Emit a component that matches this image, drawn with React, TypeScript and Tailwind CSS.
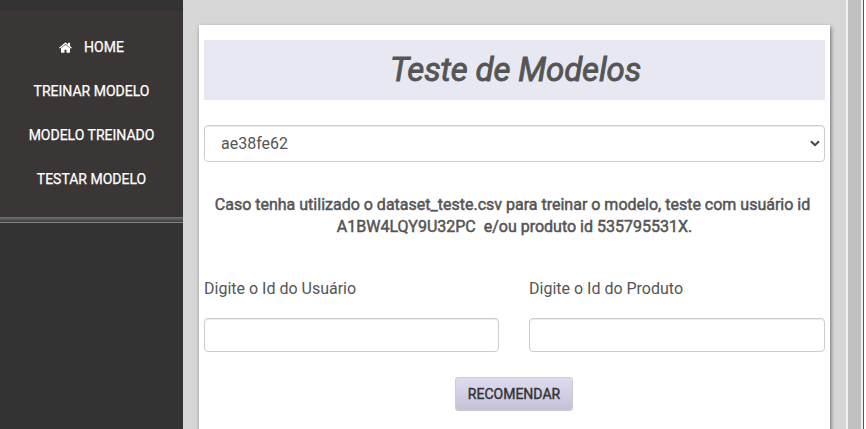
const links = ["TREINAR MODELO", "MODELO TREINADO", "TESTAR MODELO"];

function Sidebar() {
  return (
    <aside className="h-full w-[183px] shrink-0 bg-[#333333] pt-[10px]">
      <nav className="flex h-[207px] flex-col items-center bg-[#3b3636] pt-[15px] text-[14px] text-white shadow-[0_0_2px_#2b2929] [-webkit-text-stroke:0.250px_#ffffff]">
        <a className="flex h-11 items-center">
          <svg viewBox="0 0 1664 1312" className="mr-[12px] h-[11px] w-[13px] fill-white">
            <path d="M1408 768v480q0 26-19 45t-45 19H960V928H704v384H320q-26 0-45-19t-19-45V768q0-1 .5-3t.5-3l575-474 575 474q1 2 1 6zm223-69l-62 74q-8 9-21 11h-3q-13 0-21-7L832 200 140 777q-12 8-24 7-13-2-21-11l-62-74q-8-10-7-23.500t11-21.500l719-599q32-26 76-26t76 26l244 204V64q0-14 9-23t23-9h192q14 0 23 9t9 23v408l219 182q10 8 11 21.500t-7 23.500z" />
          </svg>
          HOME
        </a>
        {links.map((label) => (
          <a key={label} className="flex h-11 items-center">{label}</a>
        ))}
      </nav>
      <div className="h-[5px] bg-linear-to-b from-[#747272] to-[#3c3c3c]" />
      <div className="h-px bg-[#858585]" />
    </aside>
  );
}

function Field({ label }: { label: string }) {
  return (
    <label className="block">
      <span className="block h-[22px] leading-[22px]">{label}</span>
      <input className="mt-[18px] block h-[34px] w-full rounded-[4px] border border-[#cccccc] bg-white px-3 shadow-[inset_0_1px_1px_rgba(0,0,0,0.075)] outline-none" />
    </label>
  );
}

export default function App() {
  return (
    <div className="flex h-[429px] w-[866px] overflow-hidden bg-white font-[Roboto,sans-serif] text-[16px] text-[#555555]">
      <Sidebar />
      <main className="h-full w-[663px] shrink-0 bg-[#d7d7d7] pt-[25px] pl-4">
        <section className="h-[440px] w-[631px] bg-white px-[5px] pt-[15px] shadow-[1px_2px_4px_rgba(0,0,0,0.5)]">
          <h1 className="h-[60px] bg-[#e8e8f2] pl-[2px] text-center text-[33px] leading-[59px] tracking-[-0.15px] italic [-webkit-text-stroke:0.900px_#555555]">
            Teste de Modelos
          </h1>
          <div className="mt-[25px] flex h-[37px] items-center justify-between rounded-[4px] border border-[#cccccc] pr-[4px] pl-4 shadow-[inset_0_1px_1px_rgba(0,0,0,0.075)]">
            <span>ae38fe62</span>
            <svg viewBox="0 0 10 7" className="h-[7px] w-[10px] fill-none stroke-[#444444] stroke-2">
              <path d="M1 1.200 5 5.200 9 1.200" />
            </svg>
          </div>
          <p className="mt-8 text-center leading-[22px] whitespace-pre [-webkit-text-stroke:0.500px_#555555]">
            {"Caso tenha utilizado o dataset_teste.csv para treinar o modelo, teste com usuário id \nA1BW4LQY9U32PC  e/ou produto id 535795531X."}
          </p>
          <div className="mt-[40px] grid grid-cols-[295px_296px] gap-[30px]">
            <Field label="Digite o Id do Usuário" />
            <Field label="Digite o Id do Produto" />
          </div>
          <button className="mt-[25px] ml-[251px] block h-[34px] w-[118px] rounded-[3px] border border-[#cccccc] bg-linear-to-b from-[#dfdbef] to-[#c6c1d8] text-[14px] text-[#333333] [-webkit-text-stroke:0.400px_#333333]">
            RECOMENDAR
          </button>
        </section>
      </main>
      <div className="h-full w-[17px] shrink-0 bg-[#f1f1f1] px-[2px]">
        <div className="h-full bg-[#c1c1c1]" />
      </div>
      <div className="h-full w-px shrink-0 bg-[#555555]" />
    </div>
  );
}
